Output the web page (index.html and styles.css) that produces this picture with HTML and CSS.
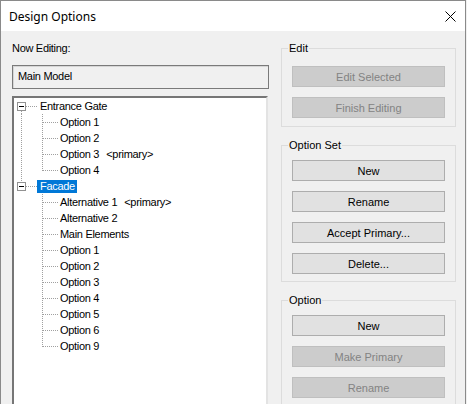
FILE: index.html
```html
<!DOCTYPE html>
<html>
<head>
<meta charset="utf-8">
<link rel="stylesheet" href="styles.css">
</head>
<body>
<div class="window">
  <div class="titlebar">
    <span class="title">Design Options</span>
    <span class="close"><svg width="11" height="11" viewBox="0 0 11 11"><path d="M0.5 0.5L10.5 10.5M10.5 0.5L0.5 10.5" stroke="#000" stroke-width="1" fill="none"/></svg></span>
  </div>
  <div class="content">
    <div class="left">
      <div class="now">Now Editing:</div>
      <div class="field">Main Model</div>
      <div class="tree">
        <div class="row">
          <span class="tw tw-first"><span class="box"><span class="minus"></span></span></span>
          <span class="lbl">Entrance Gate</span>
        </div>
        <div class="row"><span class="ind cont"></span><span class="ch"></span><span class="lbl">Option 1</span></div>
        <div class="row"><span class="ind cont"></span><span class="ch"></span><span class="lbl">Option 2</span></div>
        <div class="row"><span class="ind cont"></span><span class="ch"></span><span class="lbl">Option 3<span class="prim">&lt;primary&gt;</span></span></div>
        <div class="row"><span class="ind cont"></span><span class="ch ch-last"></span><span class="lbl">Option 4</span></div>
        <div class="row">
          <span class="tw tw-last"><span class="box"><span class="minus"></span></span></span>
          <span class="lbl sel">Facade</span>
        </div>
        <div class="row"><span class="ind"></span><span class="ch"></span><span class="lbl">Alternative 1<span class="prim">&lt;primary&gt;</span></span></div>
        <div class="row"><span class="ind"></span><span class="ch"></span><span class="lbl">Alternative 2</span></div>
        <div class="row"><span class="ind"></span><span class="ch"></span><span class="lbl">Main Elements</span></div>
        <div class="row"><span class="ind"></span><span class="ch"></span><span class="lbl">Option 1</span></div>
        <div class="row"><span class="ind"></span><span class="ch"></span><span class="lbl">Option 2</span></div>
        <div class="row"><span class="ind"></span><span class="ch"></span><span class="lbl">Option 3</span></div>
        <div class="row"><span class="ind"></span><span class="ch"></span><span class="lbl">Option 4</span></div>
        <div class="row"><span class="ind"></span><span class="ch"></span><span class="lbl">Option 5</span></div>
        <div class="row"><span class="ind"></span><span class="ch"></span><span class="lbl">Option 6</span></div>
        <div class="row"><span class="ind"></span><span class="ch ch-last"></span><span class="lbl">Option 9</span></div>
      </div>
    </div>
    <div class="right">
      <fieldset class="group g-edit">
        <legend>Edit</legend>
        <button class="btn" disabled>Edit Selected</button>
        <button class="btn" disabled>Finish Editing</button>
      </fieldset>
      <fieldset class="group g-set">
        <legend>Option Set</legend>
        <button class="btn">New</button>
        <button class="btn">Rename</button>
        <button class="btn">Accept Primary...</button>
        <button class="btn">Delete...</button>
      </fieldset>
      <fieldset class="group g-opt">
        <legend>Option</legend>
        <button class="btn">New</button>
        <button class="btn" disabled>Make Primary</button>
        <button class="btn" disabled>Rename</button>
      </fieldset>
    </div>
  </div>
</div>
</body>
</html>
```
FILE: styles.css
```css
html, body {
  margin: 0;
  padding: 0;
  background: #f0f0f0;
}
body {
  font-family: "Liberation Sans", Arial, sans-serif;
  font-size: 11px;
  color: #000;
}
.window {
  width: 466px;
  height: 404px;
  box-sizing: border-box;
  border: 1px solid #8a8a8a;
  border-bottom: none;
  background: #f0f0f0;
  overflow: hidden;
}
.titlebar {
  height: 30px;
  background: #fff;
  display: flex;
  align-items: center;
  padding-left: 8px;
}
.title {
  font-family: "Noto Sans", "Liberation Sans", sans-serif;
  font-size: 12px;
  line-height: 16px;
  margin-top: 1px;
}
.close {
  margin-left: auto;
  width: 30px;
  height: 30px;
  display: flex;
  align-items: center;
  justify-content: center;
  margin-right: 0;
}
.content {
  display: flex;
  padding-left: 11px;
}
.left {
  width: 258px;
  flex: none;
}
.now {
  margin-top: 11px;
  line-height: 13px;
  height: 13px;
  letter-spacing: -0.3px;
}
.field {
  margin-top: 10px;
  width: 257px;
  height: 24px;
  box-sizing: border-box;
  border: 1px solid #7a7a7a;
  box-shadow: inset 1px 1px 0 #d6d6d6;
  padding-left: 5px;
  line-height: 21px;
  letter-spacing: -0.3px;
}
.tree {
  margin-top: 7px;
  width: 256px;
  height: 330px;
  box-sizing: border-box;
  background: #fff;
  border-style: solid;
  border-width: 2px 2px 0 2px;
  border-color: #767676 #e3e3e3 #e3e3e3 #767676;
}
.row {
  display: flex;
  align-items: flex-start;
  height: 16px;
  letter-spacing: -0.3px;
}
.tw {
  width: 23px;
  height: 16px;
  flex: none;
  display: flex;
  align-items: flex-start;
  background-image: repeating-linear-gradient(to right, #a0a0a0 0 1px, transparent 1px 2px);
  background-size: 11px 1px;
  background-position: 12px 8px;
  background-repeat: no-repeat;
}
.tw-first {
  background-image:
    repeating-linear-gradient(to right, #a0a0a0 0 1px, transparent 1px 2px),
    repeating-linear-gradient(to bottom, #a0a0a0 0 1px, transparent 1px 2px);
  background-size: 11px 1px, 1px 3px;
  background-position: 12px 8px, 7px 13px;
  background-repeat: no-repeat;
}
.tw-last {
  background-image:
    repeating-linear-gradient(to right, #a0a0a0 0 1px, transparent 1px 2px),
    repeating-linear-gradient(to bottom, #a0a0a0 0 1px, transparent 1px 2px);
  background-size: 11px 1px, 1px 4px;
  background-position: 12px 8px, 7px 0;
  background-repeat: no-repeat;
}
.box {
  width: 9px;
  height: 9px;
  box-sizing: border-box;
  border: 1px solid #919191;
  background: #fff;
  margin-left: 3px;
  margin-top: 4px;
  display: flex;
  align-items: center;
  justify-content: center;
}
.minus {
  width: 5px;
  height: 1px;
  background: #000;
}
.ind {
  width: 23px;
  height: 16px;
  flex: none;
}
.ind.cont {
  background-image: repeating-linear-gradient(to bottom, #a0a0a0 0 1px, transparent 1px 2px);
  background-size: 1px 16px;
  background-position: 7px 0;
  background-repeat: no-repeat;
}
.ch {
  width: 21px;
  height: 16px;
  flex: none;
  background-image:
    repeating-linear-gradient(to bottom, #a0a0a0 0 1px, transparent 1px 2px),
    repeating-linear-gradient(to right, #a0a0a0 0 1px, transparent 1px 2px);
  background-size: 1px 16px, 15px 1px;
  background-position: 5px 0, 6px 8px;
  background-repeat: no-repeat;
}
.ch-last {
  background-size: 1px 9px, 15px 1px;
}
.lbl {
  padding: 0 2px 0 2px;
  line-height: 13px;
  height: 13px;
  margin-top: 2px;
  white-space: nowrap;
}
.tw + .lbl {
  padding-left: 3px;
}
.sel {
  background: #0078d7;
  color: #fff;
}
.prim {
  margin-left: 7px;
}
.right {
  margin-left: 11px;
  width: 175px;
  flex: none;
  display: flex;
  flex-direction: column;
}
.group {
  margin: 0;
  border: 1px solid #dcdcdc;
  padding: 0 9px 7px 10px;
  min-width: 0;
  display: flex;
  flex-direction: column;
  gap: 10px;
}
.group legend {
  padding: 0 1px;
  margin-left: -4px;
  line-height: 13px;
  height: 13px;
  font-size: 11px;
}
.g-edit {
  margin-top: 11px;
  padding-top: 11px;
  padding-bottom: 8px;
}
.g-set {
  margin-top: 12px;
  padding-top: 8px;
}
.g-opt {
  margin-top: 12px;
  padding-top: 8px;
}
.btn {
  display: block;
  width: 153px;
  height: 21px;
  margin: 0;
  padding: 0;
  box-sizing: border-box;
  border: 1px solid #adadad;
  background: #e1e1e1;
  font-family: "Liberation Sans", Arial, sans-serif;
  font-size: 11px;
  color: #000;
  text-align: center;
}
.btn:disabled {
  background: #cccccc;
  border-color: #bfbfbf;
  color: #838383;
}
```
